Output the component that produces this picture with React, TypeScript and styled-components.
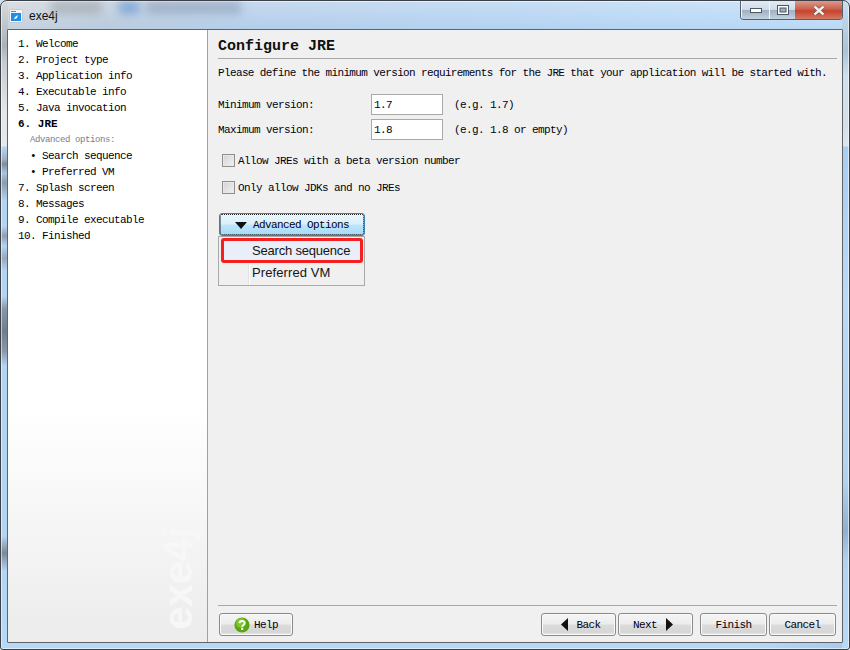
import { createGlobalStyle, styled } from "styled-components";

const Global = createGlobalStyle`
  html, body { margin: 0; padding: 0; background: #cfe0f2; }
  * { box-sizing: border-box; }
`;

const MONO = `"Liberation Mono", "DejaVu Sans Mono", monospace`;

const leftStrip = `linear-gradient(180deg,
  #d9dcde 0, #aab2ba 45px, #c4cacf 60px, #e2e6e8 110px, #e6e8ea 145px,
  #b4d4f4 146px, #9fb2c6 158px, #7f8d9c 163px, #a8c4e0 172px, #8c9cad 182px, #b4d4f4 200px,
  #b4d4f4 225px, #8f9fb0 235px, #b4d4f4 245px, #97a8ba 257px, #b4d4f4 270px,
  #b4d4f4 295px, #8897a8 308px, #6f7d8c 330px, #8997a8 350px, #b4d4f4 365px,
  #b4d4f4 535px, #7a8898 552px, #b4d4f4 570px, #b8d8f8 650px)`;

const rightStrip = `linear-gradient(180deg,
  #c8def0 0, #a8c4dc 50px, #cfe0ee 75px, #d4dfe8 125px, #dce6ee 145px,
  #a9cdf0 146px, #b9d9f8 300px, #b2d2f0 480px, #8fb0d0 530px, #b2d2f2 560px, #b9d9f8 650px)`;

const Frame = styled.div`
  position: relative;
  width: 850px;
  height: 650px;
  display: flex;
  flex-direction: column;
  padding: 0 6px 6px;
  border: 1px solid #3c4147;
  border-radius: 7px 7px 3px 3px;
  overflow: hidden;
  box-shadow: inset 0 0 0 1px rgba(255, 255, 255, 0.55);
  background:
    ${leftStrip} left top / 7px 100% no-repeat,
    ${rightStrip} right top / 7px 100% no-repeat,
    linear-gradient(90deg, #b8d8f8 0, #b8d8f8 88%, #a9c9ec 100%) left bottom / 100% 8px no-repeat,
    linear-gradient(180deg, rgba(255, 255, 255, 0.15) 0, rgba(150, 190, 230, 0.25) 100%) left top / 100% 29px no-repeat,
    linear-gradient(90deg, #d8dadc 0%, #c4cfdc 12%, #bcd3ec 30%, #bcd8f4 60%, #c6e2fb 100%);
`;

const TitleBar = styled.div`
  height: 28px;
  flex: none;
  display: flex;
  align-items: center;
  gap: 6px;
  padding: 2px 0 0 2px;
  color: #101010;
  font: 12px "Liberation Sans", sans-serif;
`;

const Smear = styled.div<{ $left: number; $w: number; $color: string }>`
  position: absolute;
  left: ${(p) => p.$left}px;
  top: 0;
  width: ${(p) => p.$w}px;
  height: 13px;
  background: ${(p) => p.$color};
  filter: blur(4px);
`;

const WinControls = styled.div`
  position: absolute;
  top: 0;
  right: 6px;
  height: 19px;
  display: flex;
  border: 1px solid #56606c;
  border-top: 0;
  border-radius: 0 0 4px 4px;
  overflow: hidden;
`;

const WinButton = styled.div<{ $close?: boolean; $w: number }>`
  width: ${(p) => p.$w}px;
  display: flex;
  align-items: center;
  justify-content: center;
  border-left: ${(p) => (p.$close ? "0" : "1px solid #f2f6fa")};
  background: ${(p) =>
    p.$close
      ? "linear-gradient(#dc9a8c 0, #c9604f 45%, #c8412a 55%, #d27a63 100%)"
      : "linear-gradient(#e2ebf4 0, #cfdbe8 48%, #9fb0c2 52%, #c4d2e0 100%)"};
`;

const Body = styled.div`
  flex: 1;
  min-height: 0;
  display: flex;
  border: 1px solid #5f6469;
  border-radius: 1px;
  background: #f0f0f0;
`;

const Sidebar = styled.nav`
  position: relative;
  width: 200px;
  flex: none;
  padding: 6px 0 0 10px;
  overflow: hidden;
  border-right: 1px solid #a0a0a0;
  background: linear-gradient(#ffffff 0, #ffffff 62%, #ececec 100%);
  font: 11px ${MONO};
  letter-spacing: -0.6px;
  color: #000010;
`;

const Step = styled.div<{ $active?: boolean }>`
  height: 16px;
  line-height: 16px;
  white-space: pre;
  font-weight: ${(p) => (p.$active ? 700 : 400)};
  letter-spacing: ${(p) => (p.$active ? "0" : "-0.6px")};
`;

const SubHead = styled.div`
  height: 16px;
  line-height: 16px;
  padding-left: 12px;
  font-size: 9px;
  letter-spacing: -0.4px;
  color: #77808a;
`;

const SubStep = styled.div`
  height: 16px;
  line-height: 16px;
  padding-left: 12px;
  white-space: pre;
`;

const Watermark = styled.div`
  position: absolute;
  right: 11px;
  bottom: 12px;
  writing-mode: vertical-rl;
  transform: rotate(180deg);
  font: 700 41px "Liberation Sans", sans-serif;
  letter-spacing: 0;
  line-height: 36px;
  color: #f7f7f7;
`;

const Main = styled.main`
  flex: 1;
  min-width: 0;
  display: flex;
  flex-direction: column;
  padding: 6px 5px 0 10px;
  font: 11px ${MONO};
  letter-spacing: -0.6px;
  color: #000010;
`;

const Heading = styled.h1`
  margin: 0;
  height: 23px;
  padding-top: 1px;
  font: 700 15px/20px ${MONO};
  letter-spacing: 0;
  color: #101010;
  border-bottom: 1px solid #a8a8a8;
`;

const Intro = styled.p`
  margin: 7px 0 0;
  height: 14px;
  line-height: 14px;
  white-space: pre;
  letter-spacing: -0.63px;
`;

const Form = styled.div`
  margin-top: 14px;
  display: flex;
  flex-direction: column;
  gap: 4px;
`;

const Field = styled.div`
  display: flex;
  align-items: center;
  height: 21px;
`;

const FieldLabel = styled.label`
  width: 153px;
`;

const FieldInput = styled.input`
  width: 72px;
  height: 21px;
  padding: 0 3px 0 2px;
  border: 1px solid #a9a9a9;
  background: #fff;
  font: 11px ${MONO};
  letter-spacing: -0.6px;
  color: #000010;
`;

const Hint = styled.span`
  margin-left: 11px;
`;

const CheckRow = styled.label`
  display: flex;
  align-items: center;
  gap: 3px;
  height: 13px;
  margin: 14px 0 0 4px;
  & + & { margin-top: 14px; }
`;

const CheckBox = styled.span`
  width: 13px;
  height: 13px;
  border: 1px solid #8f8f8f;
  background: linear-gradient(135deg, #d2d2d2, #f2f2f2);
  box-shadow: inset 0 0 0 1px #e8e8e8;
`;

const Button = styled.button<{ $w: number; $gap?: number; $padLeft?: number; $padRight?: number }>`
  width: ${(p) => p.$w}px;
  height: 23px;
  display: flex;
  align-items: center;
  justify-content: center;
  gap: ${(p) => p.$gap ?? 0}px;
  padding: 0 ${(p) => p.$padRight ?? 0}px 0 ${(p) => p.$padLeft ?? 0}px;
  border: 1px solid #8a8a8a;
  border-radius: 3px;
  background: linear-gradient(#f5f5f5 0, #ececec 48%, #dcdcdc 52%, #d6d6d6 85%, #e8e8e8 100%);
  box-shadow: inset 0 0 0 1px #fafafa;
  font: 11px ${MONO};
  letter-spacing: -0.6px;
  color: #000010;
`;

const AdvancedButton = styled(Button)`
  margin: 19px 0 0 1px;
  padding-top: 1px;
  gap: 6px;
  border-color: #3c7fb1;
  background: linear-gradient(#eaf6fd 0, #d9f0fc 48%, #bee6fd 52%, #a7d9f5 100%);
  outline: 1px dotted #222;
  outline-offset: -2px;
  box-shadow: none;
`;

const Menu = styled.div`
  width: 147px;
  height: 50px;
  padding-top: 1px;
  border: 1px solid #a9a9a9;
  background: linear-gradient(90deg, transparent 29px, #e2e3e3 29px, #e2e3e3 30px, #ffffff 30px, #ffffff 31px, transparent 31px);
  font: 13px "Liberation Sans", sans-serif;
  letter-spacing: -0.2px;
  color: #151515;
`;

const MenuItem = styled.div<{ $marked?: boolean }>`
  white-space: pre;
  ${(p) =>
    p.$marked
      ? `
    width: 142px;
    height: 25px;
    line-height: 19px;
    margin-left: 2px;
    padding-left: 28px;
    border: 3px solid #f51f1f;
    border-radius: 3px;
    background: #e9eef8;
  `
      : `
    height: 20px;
    line-height: 20px;
    padding-left: 33px;
    letter-spacing: 0.1px;
  `}
`;

const Spacer = styled.div`
  flex: 1;
`;

const Footer = styled.footer`
  flex: none;
  height: 37px;
  border-top: 1px solid #a8a8a8;
  padding: 7px 1px 0;
  display: flex;
`;

const FooterGap = styled.div<{ $w: number }>`
  width: ${(p) => p.$w}px;
  flex: none;
`;

const steps = ["1. Welcome", "2. Project type", "3. Application info", "4. Executable info", "5. Java invocation"];
const laterSteps = ["7. Splash screen", "8. Messages", "9. Compile executable", "10. Finished"];

const Arrow = ({ dir }: { dir: "left" | "right" | "down" }) => {
  const points = { left: "8,0 8,13 1,6.5", right: "0,0 0,13 7,6.5", down: "0,0 12,0 6,7" }[dir];
  const [w, h] = dir === "down" ? [12, 7] : [8, 13];
  return (
    <svg width={w} height={h} viewBox={`0 0 ${w} ${h}`}>
      <polygon points={points} fill="#101010" />
    </svg>
  );
};

const HelpIcon = () => (
  <svg width="16" height="16" viewBox="0 0 16 16">
    <circle cx="8" cy="8" r="7.6" fill="#5aa512" />
    <circle cx="7" cy="6" r="5" fill="#7cc52c" />
    <path d="M5.5 6.2c0-3 5.2-3 5.2-.1 0 1.8-2.5 1.8-2.5 3.6" fill="none" stroke="#fff" strokeWidth="1.9" />
    <rect x="7.1" y="10.8" width="2.1" height="2.1" fill="#fff" />
  </svg>
);

const AppIcon = () => (
  <svg width="14" height="14" viewBox="0 0 14 14">
    <rect x="0.5" y="0.5" width="13" height="13" rx="1" fill="#f4f6f8" stroke="#c0c8d0" />
    <rect x="2" y="4" width="10" height="8" fill="#1c8fe8" />
    <rect x="2" y="2" width="5" height="1" fill="#e8562a" />
    <path d="M5 10l1-2 3-2-1 3-2 1z" fill="#fff" />
  </svg>
);

export default function App() {
  return (
    <>
      <Global />
      <Frame>
        <Smear $left={50} $w={50} $color="rgba(120, 125, 130, 0.35)" />
        <Smear $left={118} $w={20} $color="rgba(70, 130, 210, 0.5)" />
        <Smear $left={145} $w={95} $color="rgba(110, 130, 160, 0.4)" />
        <TitleBar>
          <AppIcon />
          exe4j
        </TitleBar>
        <WinControls>
          <WinButton $w={28}>
            <svg width="12" height="5" viewBox="0 0 12 5">
              <rect x="0.5" y="0.5" width="11" height="4" fill="#fff" stroke="#4c5866" />
            </svg>
          </WinButton>
          <WinButton $w={26}>
            <svg width="12" height="10" viewBox="0 0 12 10">
              <rect x="0.5" y="0.5" width="11" height="9" fill="#fff" stroke="#4c5866" />
              <rect x="3" y="3" width="6" height="4" fill="#9fb0c2" stroke="#4c5866" />
            </svg>
          </WinButton>
          <WinButton $w={47} $close>
            <svg width="14" height="11" viewBox="0 0 14 11">
              <path d="M2.5 1.5l9 8M11.5 1.5l-9 8" stroke="#56423e" strokeWidth="3.6" />
              <path d="M2.5 1.5l9 8M11.5 1.5l-9 8" stroke="#f6f1ee" strokeWidth="2.4" />
            </svg>
          </WinButton>
        </WinControls>
        <Body>
          <Sidebar>
            {steps.map((s) => (
              <Step key={s}>{s}</Step>
            ))}
            <Step $active>6. JRE</Step>
            <SubHead>Advanced options:</SubHead>
            <SubStep>• Search sequence</SubStep>
            <SubStep>• Preferred VM</SubStep>
            {laterSteps.map((s) => (
              <Step key={s}>{s}</Step>
            ))}
            <Watermark>exe4j</Watermark>
          </Sidebar>
          <Main>
            <Heading>Configure JRE</Heading>
            <Intro>Please define the minimum version requirements for the JRE that your application will be started with.</Intro>
            <Form>
              <Field>
                <FieldLabel>Minimum version:</FieldLabel>
                <FieldInput defaultValue="1.7" />
                <Hint>(e.g. 1.7)</Hint>
              </Field>
              <Field>
                <FieldLabel>Maximum version:</FieldLabel>
                <FieldInput defaultValue="1.8" />
                <Hint>(e.g. 1.8 or empty)</Hint>
              </Field>
            </Form>
            <CheckRow>
              <CheckBox />
              Allow JREs with a beta version number
            </CheckRow>
            <CheckRow>
              <CheckBox />
              Only allow JDKs and no JREs
            </CheckRow>
            <AdvancedButton $w={146}>
              <Arrow dir="down" />
              Advanced Options
            </AdvancedButton>
            <Menu>
              <MenuItem $marked>Search sequence</MenuItem>
              <MenuItem>Preferred VM</MenuItem>
            </Menu>
            <Spacer />
            <Footer>
              <Button $w={74} $gap={4}>
                <HelpIcon />
                Help
              </Button>
              <Spacer />
              <Button $w={75} $gap={8} $padLeft={4}>
                <Arrow dir="left" />
                Back
              </Button>
              <FooterGap $w={2} />
              <Button $w={75} $gap={9} $padRight={4}>
                Next
                <Arrow dir="right" />
              </Button>
              <FooterGap $w={7} />
              <Button $w={67}>Finish</Button>
              <FooterGap $w={2} />
              <Button $w={67}>Cancel</Button>
            </Footer>
          </Main>
        </Body>
      </Frame>
    </>
  );
}
